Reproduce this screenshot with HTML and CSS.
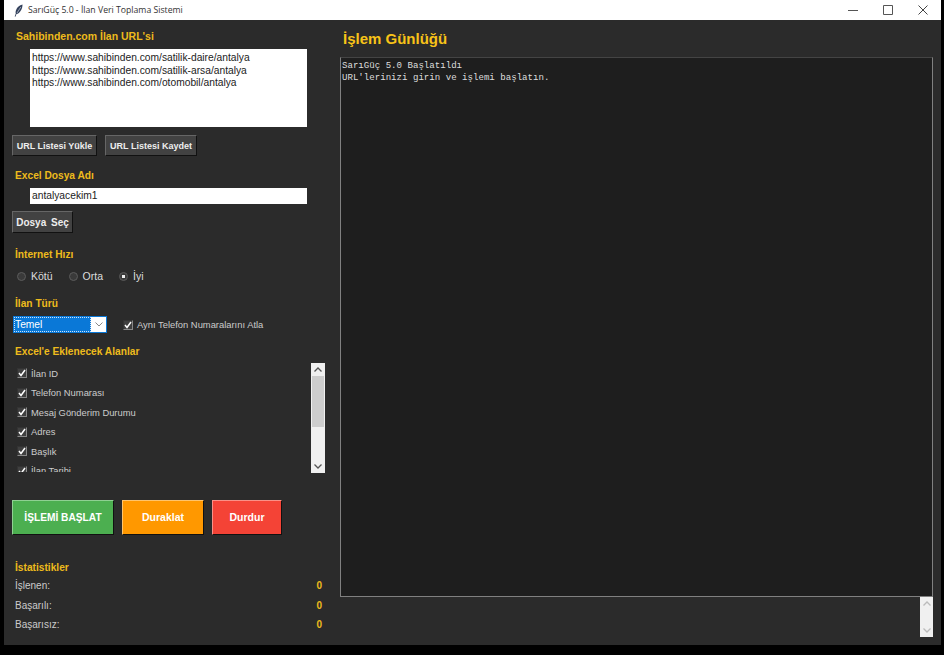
FILE: index.html
```html
<!DOCTYPE html>
<html lang="tr">
    <head>
        <title>SarıGüç 5.0 - İlan Veri Toplama Sistemi</title>
        <meta charset="UTF-8">
        <link rel="stylesheet" href="styles.css">
    </head>
    <body>
        <div class="window">
            <div class="titleBar">
                <svg class="appIcon" width="9" height="13" viewBox="0 0 9 13">
                    <path d="M8.500 .5C5.500 1 3 3.200 2 6.200 1.500 7.700 1.500 8.800 1.800 9.500L.7 12.500 1.400 12.800 2.500 10C4 10 5.800 8.500 7 6.300 8 4.500 8.500 2.500 8.500 .5Z" fill="#33415c"/>
                    <path d="M6.800 3 3 9" stroke="#c3cbd8" stroke-width=".7" fill="none"/>
                </svg>
                <span class="titleText">SarıGüç 5.0 - İlan Veri Toplama Sistemi</span>
                <div class="winButtons">
                    <svg width="10" height="10" viewBox="0 0 10 10"><path d="M0 5.500H10" stroke="#555" fill="none"/></svg>
                    <svg width="10" height="10" viewBox="0 0 10 10"><path d="M.5 .5H9.500V9.500H.5Z" stroke="#555" fill="none"/></svg>
                    <svg width="10" height="10" viewBox="0 0 10 10"><path d="M.5 .5 9.500 9.500M9.500 .5 .5 9.500" stroke="#444" fill="none"/></svg>
                </div>
            </div>
            <div class="main">
                <div class="leftPanel">
                    <h2 class="head headUrl">Sahibinden.com İlan URL'si</h2>
                    <div class="urlBox">https://www.sahibinden.com/satilik-daire/antalya<br>https://www.sahibinden.com/satilik-arsa/antalya<br>https://www.sahibinden.com/otomobil/antalya</div>
                    <div class="btnRow">
                        <button class="grayBtn btnLoad">URL Listesi Yükle</button>
                        <button class="grayBtn btnSave">URL Listesi Kaydet</button>
                    </div>
                    <h2 class="head headExcel">Excel Dosya Adı</h2>
                    <div class="fileEntry">antalyacekim1</div>
                    <button class="grayBtn btnFile">Dosya Seç</button>
                    <h2 class="head headSpeed">İnternet Hızı</h2>
                    <div class="radioRow">
                        <span class="radio"></span><span class="radioText">Kötü</span>
                        <span class="radio"></span><span class="radioText">Orta</span>
                        <span class="radio checked"></span><span class="radioText">İyi</span>
                    </div>
                    <h2 class="head headType">İlan Türü</h2>
                    <div class="typeRow">
                        <div class="combo">
                            <span class="comboText">Temel</span>
                            <svg class="comboArrow" width="8" height="5" viewBox="0 0 8 5"><path d="M.5 .5 4 4 7.500 .5" stroke="#888" fill="none"/></svg>
                        </div>
                        <label class="check skipCheck"><span class="box"><svg width="8" height="8" viewBox="0 0 8 8"><path d="M1 4 3 6.500 7 1" stroke="#fff" stroke-width="1.500" fill="none"/></svg></span>Aynı Telefon Numaralarını Atla</label>
                    </div>
                    <h2 class="head headFields">Excel'e Eklenecek Alanlar</h2>
                    <div class="fieldsWrap">
                        <div class="fieldList">
                            <label class="check"><span class="box"><svg width="8" height="8" viewBox="0 0 8 8"><path d="M1 4 3 6.500 7 1" stroke="#fff" stroke-width="1.500" fill="none"/></svg></span>İlan ID</label>
                            <label class="check"><span class="box"><svg width="8" height="8" viewBox="0 0 8 8"><path d="M1 4 3 6.500 7 1" stroke="#fff" stroke-width="1.500" fill="none"/></svg></span>Telefon Numarası</label>
                            <label class="check"><span class="box"><svg width="8" height="8" viewBox="0 0 8 8"><path d="M1 4 3 6.500 7 1" stroke="#fff" stroke-width="1.500" fill="none"/></svg></span>Mesaj Gönderim Durumu</label>
                            <label class="check"><span class="box"><svg width="8" height="8" viewBox="0 0 8 8"><path d="M1 4 3 6.500 7 1" stroke="#fff" stroke-width="1.500" fill="none"/></svg></span>Adres</label>
                            <label class="check"><span class="box"><svg width="8" height="8" viewBox="0 0 8 8"><path d="M1 4 3 6.500 7 1" stroke="#fff" stroke-width="1.500" fill="none"/></svg></span>Başlık</label>
                            <label class="check"><span class="box"><svg width="8" height="8" viewBox="0 0 8 8"><path d="M1 4 3 6.500 7 1" stroke="#fff" stroke-width="1.500" fill="none"/></svg></span>İlan Tarihi</label>
                        </div>
                        <div class="scrollBar fieldScroll">
                            <svg width="8" height="5" viewBox="0 0 8 5"><path d="M.5 4.500 4 1 7.500 4.500" stroke="#555" stroke-width="1.300" fill="none"/></svg>
                            <div class="thumbTrack"><div class="thumb"></div></div>
                            <svg width="8" height="5" viewBox="0 0 8 5"><path d="M.5 .5 4 4 7.500 .5" stroke="#555" stroke-width="1.300" fill="none"/></svg>
                        </div>
                    </div>
                    <div class="actionRow">
                        <button class="actionBtn start">İŞLEMİ BAŞLAT</button>
                        <button class="actionBtn pause">Duraklat</button>
                        <button class="actionBtn stop">Durdur</button>
                    </div>
                    <h2 class="head headStats">İstatistikler</h2>
                    <div class="statRow firstStat"><span>İşlenen:</span><span class="statVal">0</span></div>
                    <div class="statRow"><span>Başarılı:</span><span class="statVal">0</span></div>
                    <div class="statRow"><span>Başarısız:</span><span class="statVal">0</span></div>
                </div>
                <div class="rightPanel">
                    <h1 class="logHead">İşlem Günlüğü</h1>
                    <div class="logBox">SarıGüç 5.0 Başlatıldı<br>URL'lerinizi girin ve işlemi başlatın.</div>
                    <div class="scrollBar logScroll">
                        <svg width="8" height="5" viewBox="0 0 8 5"><path d="M.5 4.500 4 1 7.500 4.500" stroke="#bbb" stroke-width="1.300" fill="none"/></svg>
                        <svg width="8" height="5" viewBox="0 0 8 5"><path d="M.5 .5 4 4 7.500 .5" stroke="#bbb" stroke-width="1.300" fill="none"/></svg>
                    </div>
                </div>
            </div>
        </div>
    </body>
</html>
```

FILE: styles.css
```css
html, body {
    margin: 0;
    height: 100%;
    background: #000;
    overflow: hidden;
}
body {
    font-family: "Liberation Sans", Arial, sans-serif;
}
.window {
    margin-left: 4px;
    width: 937px;
    height: 645px;
    display: flex;
    flex-direction: column;
    background: #2b2b2b;
}
.titleBar {
    height: 20px;
    flex: none;
    background: #fff;
    display: flex;
    align-items: center;
    padding-left: 10px;
    color: #333;
}
.appIcon {
    margin-right: 5px;
}
.titleText {
    font-family: "Open Sans", sans-serif;
    font-size: 8.700px;
}
.winButtons {
    margin-left: auto;
    display: flex;
    gap: 25px;
    padding-right: 13px;
}
.main {
    flex: 1;
    display: flex;
}
.leftPanel {
    width: 336px;
    flex: none;
    display: flex;
    flex-direction: column;
    align-items: flex-start;
    padding-left: 8px;
    box-sizing: border-box;
}
.head {
    margin: 0 0 0 3px;
    font-size: 10.200px;
    line-height: 14px;
    font-weight: bold;
    color: #eebb1c;
    white-space: nowrap;
}
.headUrl {
    margin-top: 9px;
    margin-left: 4px;
    font-size: 10.500px;
}
.urlBox, .fileEntry {
    margin-left: 18px;
    width: 277px;
    box-sizing: border-box;
    background: #fff;
    color: #222;
    font-size: 10.250px;
    line-height: 12.700px;
    padding-left: 2px;
}
.urlBox {
    margin-top: 6px;
    height: 78px;
    padding-top: 3px;
}
.btnRow {
    margin-top: 8px;
    display: flex;
    gap: 8px;
}
.grayBtn {
    height: 21px;
    padding: 0;
    background: #424242;
    color: #eee;
    font-family: inherit;
    font-size: 9px;
    font-weight: bold;
    white-space: nowrap;
    border: 1px solid;
    border-color: #666 #111 #111 #666;
}
.btnLoad {
    width: 85px;
}
.btnSave {
    width: 92px;
}
.headExcel {
    margin-top: 13px;
}
.fileEntry {
    margin-top: 5px;
    height: 16px;
    line-height: 16px;
}
.btnFile {
    margin-top: 7px;
    width: 61px;
    height: 22px;
    font-size: 10px;
    word-spacing: 2px;
}
.headSpeed {
    margin-top: 15px;
}
.radioRow {
    margin-top: 7px;
    margin-left: 5px;
    display: flex;
    align-items: center;
    height: 14px;
    color: #ddd;
    font-size: 10.500px;
}
.radio {
    width: 9px;
    height: 9px;
    border-radius: 50%;
    background: #3a3a3a;
    border: 1px solid #5c5c5c;
    margin-right: 5px;
    box-sizing: border-box;
    flex: none;
}
.radio.checked {
    background: radial-gradient(circle, #eee 0 1.500px, #3a3a3a 2px);
}
.radioText {
    margin-right: 16px;
}
.headType {
    margin-top: 14px;
}
.typeRow {
    margin-top: 4px;
    display: flex;
    align-items: center;
}
.combo {
    margin-left: 1px;
    width: 94px;
    height: 17px;
    box-sizing: border-box;
    border: 1px solid #0a78d7;
    background: #fff;
    display: flex;
    align-items: center;
}
.comboText {
    width: 77px;
    height: 15px;
    line-height: 15px;
    background: #0a78d7;
    color: #fff;
    font-size: 10.250px;
    padding-left: 1px;
    box-sizing: border-box;
    outline: 1px dotted #cfe4f8;
    outline-offset: -1px;
}
.comboArrow {
    margin-left: 4px;
}
.check {
    display: flex;
    align-items: center;
    color: #ccc;
    font-size: 9.400px;
    height: 19.500px;
    white-space: nowrap;
}
.box {
    width: 10px;
    height: 10px;
    background: #3f3f3f;
    border: 1px solid #777;
    border-color: #333 #888 #888 #333;
    box-sizing: border-box;
    display: flex;
    align-items: center;
    justify-content: center;
    margin-right: 4px;
    flex: none;
}
.skipCheck {
    margin-left: 16px;
}
.headFields {
    margin-top: 10px;
}
.fieldsWrap {
    margin-top: 4px;
    width: 313px;
    height: 111px;
    display: flex;
    justify-content: space-between;
}
.fieldList {
    margin-left: 5px;
    padding-top: 1px;
    height: 109px;
    box-sizing: border-box;
    overflow: hidden;
}
.scrollBar {
    background: #f0f0f0;
    display: flex;
    flex-direction: column;
    align-items: center;
    justify-content: space-between;
    box-sizing: border-box;
    padding: 4px 0;
}
.fieldScroll {
    width: 14px;
    height: 110px;
}
.thumbTrack {
    flex: 1;
    align-self: stretch;
    margin-top: 4px;
    margin-bottom: 4px;
}
.thumb {
    height: 51px;
    background: #cdcdcd;
    margin: 0 1px;
}
.actionRow {
    margin-top: 26px;
    display: flex;
    gap: 8px;
    align-items: flex-start;
}
.actionBtn {
    height: 35px;
    padding: 0;
    color: #fff;
    font-family: inherit;
    font-size: 10.500px;
    font-weight: bold;
    white-space: nowrap;
    border: 1px solid;
    border-right-color: #111;
    border-bottom-color: #111;
}
.start {
    width: 102px;
    background: #4caf50;
    border-top-color: #8fd092;
    border-left-color: #8fd092;
    font-size: 10.200px;
}
.pause {
    width: 82px;
    background: #ff9800;
    border-top-color: #ffc46c;
    border-left-color: #ffc46c;
}
.stop {
    width: 70px;
    background: #f44336;
    border-top-color: #fa9087;
    border-left-color: #fa9087;
}
.headStats {
    margin-top: 26px;
}
.statRow {
    margin-left: 3px;
    margin-top: 5.500px;
    width: 307px;
    display: flex;
    justify-content: space-between;
    color: #ccc;
    font-size: 10px;
    line-height: 14px;
}
.firstStat {
    margin-top: 4.500px;
}
.statVal {
    color: #eebb1c;
    font-weight: bold;
}
.rightPanel {
    flex: 1;
    min-width: 0;
    display: flex;
    flex-direction: column;
    align-items: flex-end;
    padding-right: 8px;
}
.logHead {
    align-self: flex-start;
    margin: 9px 0 0 3px;
    font-size: 15px;
    line-height: 19px;
    font-weight: bold;
    color: #f8c318;
}
.logBox {
    margin-top: 9px;
    width: 593px;
    height: 540px;
    box-sizing: border-box;
    background: #1e1e1e;
    border: 1px solid #808080;
    border-top-color: #444;
    color: #ddd;
    font-family: "Liberation Mono", monospace;
    font-size: 9.100px;
    line-height: 12px;
    padding: 2px 1px;
}
.logScroll {
    width: 13px;
    height: 40px;
}
```
